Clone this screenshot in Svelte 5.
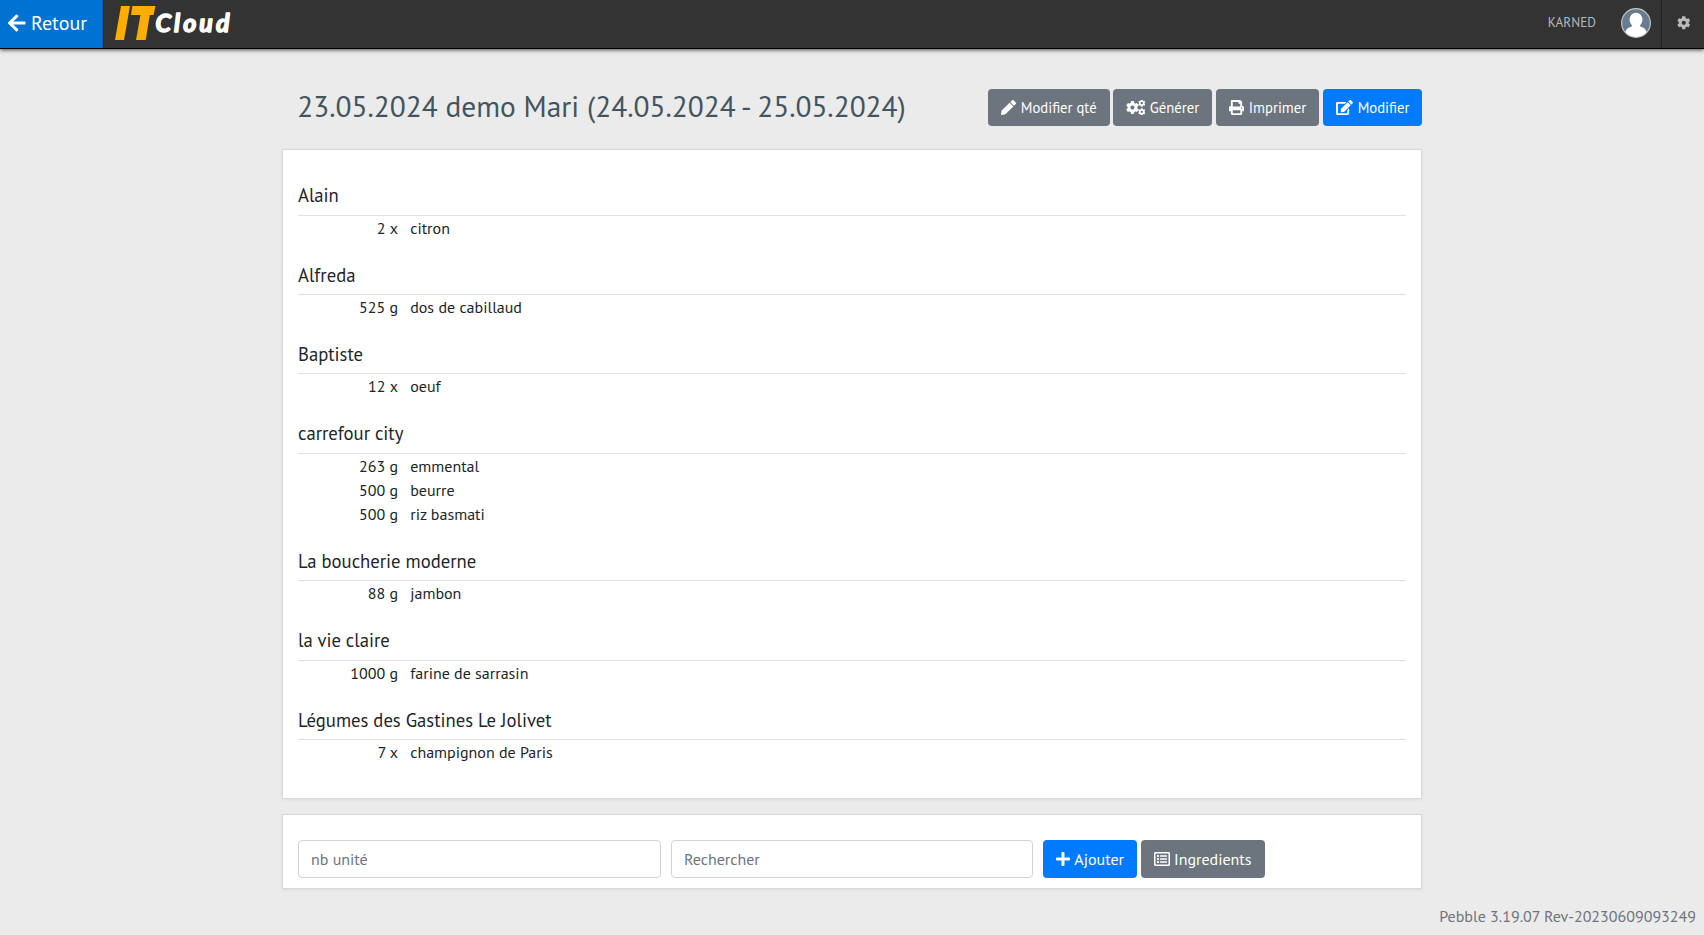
<script>
  const groups = [
    { name: 'Alain', items: [['2 x', 'citron']] },
    { name: 'Alfreda', items: [['525 g', 'dos de cabillaud']] },
    { name: 'Baptiste', items: [['12 x', 'oeuf']] },
    { name: 'carrefour city', items: [['263 g', 'emmental'], ['500 g', 'beurre'], ['500 g', 'riz basmati']] },
    { name: 'La boucherie moderne', items: [['88 g', 'jambon']] },
    { name: 'la vie claire', items: [['1000 g', 'farine de sarrasin']] },
    { name: 'Légumes des Gastines Le Jolivet', items: [['7 x', 'champignon de Paris']] }
  ];

  const icons = {
    back: [448, 'M257.500 445.100l-22.200 22.200c-9.400 9.400-24.600 9.400-33.900 0L7 273c-9.400-9.400-9.400-24.600 0-33.900L201.400 44.700c9.400-9.400 24.600-9.400 33.900 0l22.200 22.200c9.500 9.500 9.300 25-.4 34.300L136.600 216H424c13.300 0 24 10.700 24 24v32c0 13.300-10.700 24-24 24H136.600l120.500 114.800c9.800 9.300 10 24.800.4 34.300z'],
    pen: [512, 'M497.900 142.100l-46.100 46.100c-4.700 4.700-12.300 4.700-17 0l-111-111c-4.700-4.700-4.700-12.300 0-17l46.100-46.100c18.700-18.700 49.100-18.700 67.900 0l60.100 60.100c18.800 18.700 18.800 49.100 0 67.900zM284.200 99.800L21.600 362.400.4 483.900c-2.900 16.400 11.400 30.600 27.800 27.800l121.500-21.300 262.600-262.600c4.700-4.700 4.700-12.300 0-17l-111-111c-4.800-4.700-12.400-4.700-17.100 0z'],
    print: [512, 'M448 192V77.250c0-8.490-3.370-16.620-9.370-22.630L393.370 9.370c-6-6-14.140-9.370-22.630-9.370H96C78.330 0 64 14.330 64 32v160c-35.350 0-64 28.650-64 64v112c0 8.840 7.160 16 16 16h48v96c0 17.670 14.330 32 32 32h320c17.670 0 32-14.330 32-32v-96h48c8.840 0 16-7.160 16-16V256c0-35.350-28.650-64-64-64zm-64 256H128v-96h256v96zm0-224H128V64h192v48c0 8.840 7.160 16 16 16h48v96zm48 72c-13.250 0-24-10.750-24-24 0-13.260 10.750-24 24-24s24 10.740 24 24c0 13.250-10.750 24-24 24z'],
    edit: [576, 'M402.600 83.200l90.200 90.200c3.800 3.800 3.800 10 0 13.800L274.400 405.600l-92.800 10.300c-12.400 1.400-22.900-9.100-21.500-21.500l10.300-92.800L388.800 83.200c3.800-3.800 10-3.800 13.800 0zm162-22.900l-48.800-48.800c-15.200-15.200-39.900-15.200-55.200 0l-35.400 35.400c-3.800 3.800-3.800 10 0 13.800l90.200 90.200c3.800 3.800 10 3.800 13.800 0l35.400-35.400c15.200-15.300 15.200-40 0-55.200zM384 346.200V448H64V128h229.800c3.200 0 6.200-1.300 8.500-3.500l40-40c7.600-7.600 2.200-20.500-8.500-20.500H48C21.500 64 0 85.500 0 112v352c0 26.500 21.500 48 48 48h352c26.500 0 48-21.500 48-48V306.200c0-10.700-12.900-16-20.500-8.500l-40 40c-2.200 2.300-3.500 5.300-3.500 8.500z'],
    plus: [448, 'M416 208H272V64c0-17.670-14.330-32-32-32h-32c-17.670 0-32 14.330-32 32v144H32c-17.670 0-32 14.330-32 32v32c0 17.670 14.330 32 32 32h144v144c0 17.670 14.330 32 32 32h32c17.670 0 32-14.330 32-32V304h144c17.670 0 32-14.330 32-32v-32c0-17.670-14.330-32-32-32z'],
    list: [512, 'M464 32H48C21.490 32 0 53.490 0 80v352c0 26.510 21.490 48 48 48h416c26.510 0 48-21.490 48-48V80c0-26.510-21.490-48-48-48zm-6 400H54a6 6 0 0 1-6-6V86a6 6 0 0 1 6-6h404a6 6 0 0 1 6 6v340a6 6 0 0 1-6 6zm-42-92v24c0 6.627-5.373 12-12 12H204c-6.627 0-12-5.373-12-12v-24c0-6.627 5.373-12 12-12h200c6.627 0 12 5.373 12 12zm0-96v24c0 6.627-5.373 12-12 12H204c-6.627 0-12-5.373-12-12v-24c0-6.627 5.373-12 12-12h200c6.627 0 12 5.373 12 12zm0-96v24c0 6.627-5.373 12-12 12H204c-6.627 0-12-5.373-12-12v-24c0-6.627 5.373-12 12-12h200c6.627 0 12 5.373 12 12zm-252 12c0 19.882-16.118 36-36 36s-36-16.118-36-36 16.118-36 36-36 36 16.118 36 36zm0 96c0 19.882-16.118 36-36 36s-36-16.118-36-36 16.118-36 36-36 36 16.118 36 36zm0 96c0 19.882-16.118 36-36 36s-36-16.118-36-36 16.118-36 36-36 36 16.118 36 36z'],
    cog: [512, 'M487.400 315.700l-42.600-24.600c4.300-23.200 4.300-47 0-70.200l42.600-24.600c4.900-2.800 7.100-8.600 5.500-14-11.100-35.600-30-67.800-54.700-94.600-3.800-4.100-10-5.100-14.800-2.300L380.800 110c-17.900-15.400-38.500-27.300-60.800-35.100V25.800c0-5.600-3.900-10.500-9.400-11.700-36.700-8.200-74.300-7.800-109.200 0-5.500 1.200-9.400 6.100-9.400 11.700V75c-22.200 7.900-42.800 19.800-60.800 35.100L88.700 85.500c-4.900-2.800-11-1.900-14.800 2.300-24.700 26.700-43.600 58.900-54.700 94.600-1.700 5.400.6 11.200 5.500 14L67.300 221c-4.300 23.200-4.300 47 0 70.200l-42.600 24.600c-4.900 2.800-7.100 8.600-5.500 14 11.100 35.600 30 67.800 54.700 94.600 3.800 4.100 10 5.100 14.800 2.300l42.600-24.600c17.900 15.400 38.500 27.300 60.800 35.100v49.200c0 5.600 3.900 10.500 9.400 11.700 36.700 8.200 74.300 7.800 109.200 0 5.500-1.200 9.400-6.100 9.400-11.700v-49.200c22.200-7.900 42.800-19.800 60.800-35.100l42.600 24.600c4.900 2.800 11 1.900 14.800-2.300 24.700-26.700 43.600-58.900 54.700-94.600 1.500-5.500-.7-11.300-5.600-14.100zM256 336c-44.100 0-80-35.900-80-80s35.900-80 80-80 80 35.900 80 80-35.900 80-80 80z']
  };
</script>

{#snippet icon(id, size)}
  <svg class="icon" viewBox="0 0 {icons[id][0]} 512" width={(size * icons[id][0]) / 512} height={size}>
    <path d={icons[id][1]} />
  </svg>
{/snippet}

{#snippet gear(x, y, s)}
  <path transform="translate({x} {y}) scale({s}) translate(-256 -256)" d={icons.cog[1]} />
{/snippet}

<header>
  <button class="back">{@render icon('back', 20)}<span>Retour</span></button>
  <svg class="logo" width="120" height="46" viewBox="0 0 120 46">
    <g class="it">
      <path d="M7 6H16L10 40H1z" />
      <path d="M18.300 6H41.500L39.500 15H35.800L31.700 40H22L26.500 15H17z" />
    </g>
    <text class="cloud" x="41.500" y="32" textLength="74" lengthAdjust="spacing">Cloud</text>
  </svg>
  <span class="user">KARNED</span>
  <svg class="avatar" width="30" height="30" viewBox="0 0 30 30">
    <defs><clipPath id="face"><circle cx="15" cy="15" r="14.300" /></clipPath></defs>
    <circle cx="15" cy="15" r="14.300" fill="#687c90" />
    <g clip-path="url(#face)" fill="#fff">
      <ellipse cx="15" cy="11.700" rx="6.500" ry="7" />
      <path d="M11 15H19V18.300C22 19.500 25 20.500 26 25V30H4V25C5 20.500 8 19.500 11 18.300z" />
    </g>
    <circle cx="15" cy="15" r="14.400" fill="none" stroke="#c4c8cb" stroke-width="1.100" />
  </svg>
  <button class="settings">{@render icon('cog', 13.5)}</button>
</header>

<main>
  <div class="title-row">
    <h1>23.05.2024 demo Mari (24.05.2024 - 25.05.2024)</h1>
    <div class="actions">
      <button class="btn w1">{@render icon('pen', 15)}<span>Modifier qté</span></button>
      <button class="btn w2">
        <svg class="icon" viewBox="0 0 640 512" width="19" height="15">
          {@render gear(216, 256, 0.88)}
          {@render gear(534, 108, 0.5)}
          {@render gear(534, 404, 0.5)}
        </svg><span>Générer</span>
      </button>
      <button class="btn w3">{@render icon('print', 15)}<span>Imprimer</span></button>
      <button class="btn primary w4">{@render icon('edit', 15)}<span>Modifier</span></button>
    </div>
  </div>

  <section class="card list">
    {#each groups as g}
      <h2>{g.name}</h2>
      <ul>
        {#each g.items as [qty, label]}
          <li><span class="qty">{qty}</span><span>{label}</span></li>
        {/each}
      </ul>
    {/each}
  </section>

  <section class="card form">
    <input placeholder="nb unité" />
    <input class="search" placeholder="Rechercher" />
    <div class="actions">
      <button class="btn primary add">{@render icon('plus', 16)}<span>Ajouter</span></button>
      <button class="btn ing">{@render icon('list', 16)}<span>Ingredients</span></button>
    </div>
  </section>
</main>
<footer>Pebble 3.19.07 Rev-20230609093249</footer>

<style>
  :global(body) {
    background: #ebebeb;
    color: #212529;
    font-family: 'PT Sans', 'Noto Sans', sans-serif;
    font-size: 16px;
    overflow: hidden;
  }
  button, input { font: inherit; box-sizing: border-box; margin: 0; }
  .icon { display: block; fill: currentColor; flex: none; }
  header {
    display: flex;
    align-items: center;
    height: 48px;
    background: #333;
    border-bottom: 1px solid #000;
    box-shadow: 0 1px 4px rgba(0, 0, 0, .7);
  }
  .back {
    display: flex;
    align-items: center;
    gap: 5.500px;
    width: 103px;
    height: 48px;
    padding: 0 0 2px 8px;
    border: 0;
    border-right: 1px solid #0a5dab;
    background: #0072d2;
    color: #fff;
    font-size: 20px;
  }
  .logo { margin: 0 auto 2px 11px; }
  .it { fill: #ffae00; }
  .cloud { fill: #fff; stroke: #fff; stroke-width: 1.500px; stroke-linejoin: round; font: italic 700 25px Lato, sans-serif; }
  .user { margin: 0 25px 4px 0; color: #b8b8b8; font-size: 13.300px; }
  .avatar { margin-bottom: 2px; }
  .settings {
    display: flex;
    align-items: center;
    width: 43px;
    height: 48px;
    margin-left: 10px;
    padding: 0 0 2px 15px;
    border: 0;
    border-left: 1px solid #222;
    background: none;
    color: #bbb;
  }
  main { width: 1140px; margin: 0 auto; }
  .title-row { display: flex; justify-content: space-between; height: 60px; padding: 40px 0 0 15.300px; }
  h1 { margin: -3px 0 0; color: #43545f; font-size: 29.330px; line-height: 40px; font-weight: 400; white-space: nowrap; }
  .actions { display: flex; gap: 4px; }
  .btn {
    display: flex;
    align-items: center;
    gap: 4.800px;
    height: 37px;
    padding: 0 0 0 13px;
    border: 0;
    border-radius: 4px;
    background: #6c757d;
    color: #fff;
    font-size: 14.700px;
    white-space: nowrap;
  }
  .primary { background: #007bff; }
  .w1 { width: 122px; margin-right: -1px; }
  .w2 { width: 99px; }
  .w3 { width: 103px; }
  .w4 { width: 99px; }
  .card {
    box-sizing: border-box;
    border: 1px solid #d8d8d8;
    background: #fff;
    box-shadow: 0 1px 3px rgba(0, 0, 0, .06);
  }
  .list { height: 650px; padding: 30.720px 15px 0; }
  h2 { margin: 0; height: 33.330px; padding-top: .67px; border-bottom: 1px solid #dee2e6; font-size: 18.660px; line-height: 29px; font-weight: 400; }
  ul { list-style: none; margin: 0 0 15.390px; padding: 0 0 5px; }
  li { display: flex; gap: 12.200px; height: 24px; line-height: 24px; }
  .qty { width: 100px; text-align: right; }
  .form { display: flex; height: 75px; margin-top: 15px; padding: 25px 15px 0; }
  .form input {
    width: 363px;
    height: 38px;
    margin-right: 10px;
    padding: 0 12px;
    border: 1px solid #ced4da;
    border-radius: 4px;
    background: #fff;
  }
  .form .search { width: 362px; }
  .form input::placeholder { color: #6c757d; opacity: 1; }
  .form .btn { height: 38px; font-size: 16px; gap: 4px; }
  .form .add { width: 94px; padding-left: 13.300px; }
  .ing { width: 124px; }
  footer { padding: 16px 8px 0; color: #6c757d; text-align: right; line-height: 22px; }
</style>
